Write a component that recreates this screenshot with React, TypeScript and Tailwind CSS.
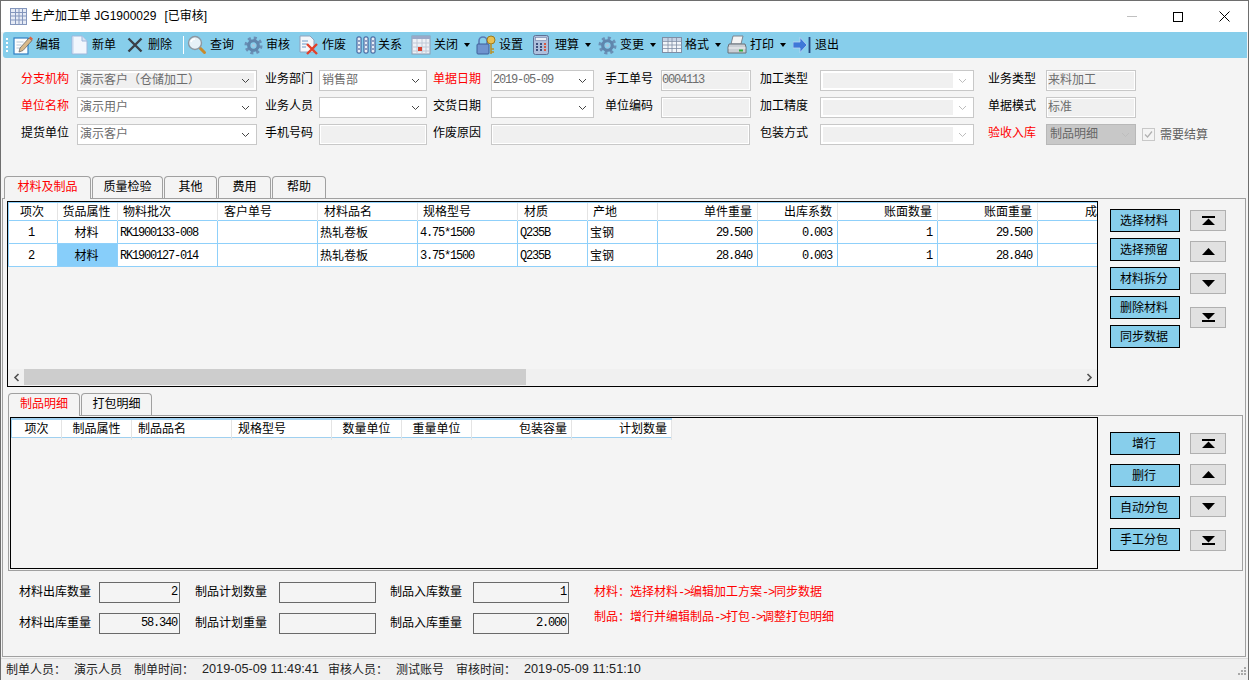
import type { ReactNode } from "react";

const mono = "font-['Liberation_Mono','Noto_Sans_CJK_SC',monospace] tracking-[-1.2px]";
const isLatin = (s: string) => /^[\x00-\x7f]*$/.test(s);

function Chevron({ light }: { light?: boolean }) {
  return (
    <svg width="9" height="6" viewBox="0 0 9 6" className="shrink-0">
      <path d="M1 1l3.5 3.5L8 1" fill="none" stroke={light ? "#bdbdbd" : "#444"} strokeWidth="1" />
    </svg>
  );
}

/* ---- toolbar icons ---- */
function IconEdit() {
  return (
    <svg width="20" height="20" viewBox="0 0 20 20">
      <rect x="1" y="3" width="14" height="16" fill="#fdfdfd" stroke="#2f7fc4" strokeWidth="1.2" />
      <path d="M3.5 7h7M3.5 10h5M3.5 13h5" stroke="#b9c7d6" />
      <path d="M7 13l9-10 3 2.5-9 10-4 1.5z" fill="#d9b98a" stroke="#5b5b5b" strokeWidth=".7" />
      <path d="M16 3l1.4-1.6 2.4 2.2L19 5.500z" fill="#e2603c" />
    </svg>
  );
}
function IconNew() {
  return (
    <svg width="17" height="20" viewBox="0 0 17 20">
      <path d="M1 1h10l5 5v13H1z" fill="#f1f6fd" stroke="#9db7dc" />
      <path d="M11 1v5h5" fill="#d5e2f4" stroke="#9db7dc" />
      <path d="M2 18V2" stroke="#c2d3ec" />
    </svg>
  );
}
function IconDelete() {
  return (
    <svg width="16" height="16" viewBox="0 0 16 16">
      <path d="M1.500 1.500l13 13M14.500 1.500l-13 13" stroke="#3a4048" strokeWidth="2.400" />
    </svg>
  );
}
function IconSearch() {
  return (
    <svg width="20" height="20" viewBox="0 0 20 20">
      <path d="M12.500 12.500l5 5" stroke="#c98a2c" strokeWidth="3" strokeLinecap="round" />
      <circle cx="8" cy="8" r="6.500" fill="#e6f1f7" stroke="#8c98a3" strokeWidth="1.400" />
      <path d="M4 7a4 4 0 0 1 4-3" fill="none" stroke="#fff" strokeWidth="1.500" />
    </svg>
  );
}
function IconGear() {
  return (
    <svg width="19" height="19" viewBox="0 0 20 20">
      <circle cx="10" cy="10" r="7.500" fill="none" stroke="#6a8fb5" strokeWidth="4" strokeDasharray="3 2.890" />
      <circle cx="10" cy="10" r="5" fill="none" stroke="#5f86ad" strokeWidth="3.400" />
      <circle cx="10" cy="10" r="1.800" fill="#a9c4dc" />
    </svg>
  );
}
function IconCancel() {
  return (
    <svg width="20" height="20" viewBox="0 0 20 20">
      <path d="M1 1h10l4 4v12H1z" fill="#f3f6fa" stroke="#8ea3bd" />
      <path d="M3 6h6M3 9h5M3 12h4" stroke="#6d9ac8" />
      <path d="M8 9l10 10M18 9L8 19" stroke="#e2402a" strokeWidth="2.400" />
    </svg>
  );
}
function IconColumns() {
  return (
    <svg width="20" height="18" viewBox="0 0 20 18">
      {[1, 8, 15].map((x) => (
        <g key={x}>
          <rect x={x} y="1" width="4" height="16" rx="1" fill="#e8eef6" stroke="#2f4f8f" />
          <path d={`M${x + 1} 5h2M${x + 1} 9h2M${x + 1} 13h2`} stroke="#2f4f8f" />
        </g>
      ))}
    </svg>
  );
}
function IconCalendar() {
  return (
    <svg width="20" height="20" viewBox="0 0 20 20">
      <rect x="1" y="1" width="18" height="18" fill="#eef1f6" stroke="#8d9ab0" />
      <rect x="1" y="1" width="18" height="3" fill="#9aa9c8" />
      <path d="M1 8h18M1 12h18M1 16h18M6 4v15M11 4v15M15 4v15" stroke="#bfc8d6" />
      <rect x="7" y="12" width="4" height="4" fill="#d9402e" />
    </svg>
  );
}
function IconLockKey() {
  return (
    <svg width="20" height="20" viewBox="0 0 20 20">
      <path d="M3 9V6a4 4 0 0 1 8 0v3" fill="none" stroke="#5a7bb5" strokeWidth="1.600" />
      <rect x="1" y="9" width="12" height="10" rx="1" fill="#6f94cf" stroke="#3f5e99" />
      <circle cx="15" cy="5" r="4" fill="#e8c052" stroke="#9a7a20" />
      <path d="M15 9v10M15 14h3M15 17h3" stroke="#b8922a" strokeWidth="1.600" />
    </svg>
  );
}
function IconCalculator() {
  return (
    <svg width="16" height="20" viewBox="0 0 16 20">
      <rect x=".5" y=".5" width="15" height="19" rx="2" fill="#aebfdc" stroke="#5e6f95" />
      <rect x="2.500" y="2.500" width="11" height="3" fill="#eef3fa" stroke="#6d7ea6" strokeWidth=".6" />
      {[8, 11, 14].map((y) =>
        [3, 7, 11].map((x) => (
          <rect key={`${x}-${y}`} x={x} y={y} width="2" height="2" fill={x === 11 ? "#d8573f" : "#3d4f7c"} />
        )),
      )}
    </svg>
  );
}
function IconGrid() {
  return (
    <svg width="20" height="18" viewBox="0 0 20 18">
      <rect x=".5" y="1.500" width="19" height="15" fill="#f2f5f9" stroke="#7f8ea5" />
      <rect x="1" y="2" width="18" height="3" fill="#c5d2e4" />
      <path d="M1 5.500h18M1 9h18M1 12.500h18M6 2v14M10 2v14M14.500 2v14" stroke="#7f8ea5" strokeWidth=".8" />
    </svg>
  );
}
function IconPrinter() {
  return (
    <svg width="20" height="20" viewBox="0 0 20 20">
      <path d="M6 1h10l-2 8H4z" fill="#f4f4f4" stroke="#7c8590" />
      <path d="M2 9h16l1 3v6H1v-6z" fill="#c9ced4" stroke="#687079" />
      <path d="M1.500 13h17" stroke="#f2f2f2" />
      <rect x="12" y="14.500" width="4" height="2" fill="#2fae3d" />
    </svg>
  );
}
function IconExit() {
  return (
    <svg width="18" height="18" viewBox="0 0 18 18">
      <path d="M0 6h7V1.500L14 9l-7 7.500V12H0z" fill="#3f78d8" stroke="#bcd4f2" strokeWidth=".8" />
      <path d="M16.500 1v16" stroke="#27497f" strokeWidth="1.800" />
    </svg>
  );
}

function ToolItem({ icon, label, gap, width, caret }: { icon: ReactNode; label: string; gap: string; width: string; caret?: boolean }) {
  return (
    <div className={`flex items-center shrink-0 ${width}`}>
      {icon}
      <span className={`text-[12px] text-black ${gap}`}>{label}</span>
      {caret && <span className="ml-[6px] w-0 h-0 border-x-[3px] border-x-transparent border-t-[4px] border-t-black" />}
    </div>
  );
}

function Toolbar() {
  return (
    <div className="ml-[2px] mr-[1px] h-[26px] bg-[#87ceeb] rounded-l-[3px] flex items-center shrink-0">
      <div className="w-[10px] shrink-0 flex flex-col gap-[2px] pl-[3px]">
        {[0, 1, 2, 3].map((i) => (
          <div key={i} className="w-[2px] h-[2px] bg-white" />
        ))}
      </div>
      <ToolItem width="w-[58px]" gap="ml-[3px]" icon={<IconEdit />} label="编辑" />
      <ToolItem width="w-[56px]" gap="ml-[4px]" icon={<IconNew />} label="新单" />
      <ToolItem width="w-[56px]" gap="ml-[5px]" icon={<IconDelete />} label="删除" />
      <div className="w-[4px] h-[18px] shrink-0 border-l border-white" />
      <ToolItem width="w-[57px]" gap="ml-[3px]" icon={<IconSearch />} label="查询" />
      <ToolItem width="w-[55px]" gap="ml-[3px]" icon={<IconGear />} label="审核" />
      <ToolItem width="w-[57px]" gap="ml-[3px]" icon={<IconCancel />} label="作废" />
      <ToolItem width="w-[55px]" gap="ml-[2px]" icon={<IconColumns />} label="关系" />
      <ToolItem width="w-[65px]" gap="ml-[3px]" icon={<IconCalendar />} label="关闭" caret />
      <ToolItem width="w-[57px]" gap="ml-[3px]" icon={<IconLockKey />} label="设置" />
      <ToolItem width="w-[65px]" gap="ml-[6px]" icon={<IconCalculator />} label="理算" caret />
      <ToolItem width="w-[64px]" gap="ml-[3px]" icon={<IconGear />} label="变更" caret />
      <ToolItem width="w-[65px]" gap="ml-[3px]" icon={<IconGrid />} label="格式" caret />
      <ToolItem width="w-[66px]" gap="ml-[3px]" icon={<IconPrinter />} label="打印" caret />
      <ToolItem width="w-[50px]" gap="ml-[4px]" icon={<IconExit />} label="退出" />
    </div>
  );
}

/* ---- form ---- */
type FieldKind = "combo" | "comboGray" | "comboEmpty" | "input" | "wide" | "dark";
type Cell = { label: string; red?: boolean; kind: FieldKind; value?: string };

const labelPads = ["", "pl-[8px]", "pl-[6px]", "pl-[11px]", "pl-[9px]", "pl-[14px]"];

const formRows: Cell[][] = [
  [
    { label: "分支机构", red: true, kind: "comboGray", value: "演示客户（仓储加工）" },
    { label: "业务部门", kind: "combo", value: "销售部" },
    { label: "单据日期", red: true, kind: "combo", value: "2019-05-09" },
    { label: "手工单号", kind: "input", value: "0004113" },
    { label: "加工类型", kind: "comboEmpty" },
    { label: "业务类型", kind: "input", value: "来料加工" },
  ],
  [
    { label: "单位名称", red: true, kind: "combo", value: "演示用户" },
    { label: "业务人员", kind: "combo" },
    { label: "交货日期", kind: "combo" },
    { label: "单位编码", kind: "input" },
    { label: "加工精度", kind: "comboEmpty" },
    { label: "单据模式", kind: "input", value: "标准" },
  ],
  [
    { label: "提货单位", kind: "combo", value: "演示客户" },
    { label: "手机号码", kind: "input" },
    { label: "作废原因", kind: "wide" },
    { label: "", kind: "wide" },
    { label: "包装方式", kind: "comboEmpty" },
    { label: "验收入库", red: true, kind: "dark", value: "制品明细" },
  ],
];

function Value({ text }: { text?: string }) {
  if (!text) return null;
  return <span className={`text-[12px] pb-[2px] ${isLatin(text) ? `${mono} -ml-px` : ""}`}>{text}</span>;
}

function Field({ kind, value }: { kind: FieldKind; value?: string }) {
  if (kind === "combo")
    return (
      <div className="h-[21px] border border-[#c8c8c8] bg-white text-[#6d6d6d] flex items-center justify-between pl-[2px] pr-[6px]">
        <Value text={value} />
        <span className="ml-auto"><Chevron /></span>
      </div>
    );
  if (kind === "comboGray")
    return (
      <div className="h-[21px] border border-[#c8c8c8] bg-white p-[2px]">
        <div className="h-full bg-[#f0f0f0] text-[#6d6d6d] flex items-center justify-between pr-[4px]">
          <Value text={value} />
          <Chevron />
        </div>
      </div>
    );
  if (kind === "comboEmpty")
    return (
      <div className="h-[21px] border border-[#c8c8c8] bg-white p-[2px] flex items-stretch">
        <div className="flex-1 bg-[#f0f0f0]" />
        <div className="w-[18px] flex items-center justify-center"><Chevron light /></div>
      </div>
    );
  if (kind === "dark")
    return (
      <div className="h-[21px] border border-[#b8b8b8] bg-[#c8c8c8] text-[#666] flex items-center justify-between pl-[3px] pr-[5px]">
        <Value text={value} />
        <Chevron light />
      </div>
    );
  return (
    <div className="h-[21px] border border-[#c8c8c8] bg-white p-[1px]">
      <div className="h-full bg-[#f0f0f0] text-[#6d6d6d] flex items-center">
        <Value text={value} />
      </div>
    </div>
  );
}

function FormGrid() {
  return (
    <div className="pl-[20px] pt-[12px] grid grid-cols-[56px_180px_62px_108px_64px_103px_67px_90px_69px_154px_72px_90px_auto] gap-y-[6px] shrink-0">
      {formRows.map((row, r) =>
        row.map((cell, c) => {
          // 作废原因 spans through the 单位编码 column
          if (r === 2 && c === 3) return null;
          return (
            <div key={`${r}-${c}`} className="contents">
              <div className={`text-[12px] leading-[19px] whitespace-nowrap ${labelPads[c]} ${cell.red ? "text-[#ff0000]" : "text-black"}`}>
                {cell.label}
              </div>
              <div className={r === 2 && c === 2 ? "col-span-3 pr-[1px]" : ""}>
                <Field kind={cell.kind} value={cell.value} />
              </div>
              {c === 5 && (
                <div className="pl-[6px] flex items-center gap-[5px] text-[12px] text-[#5f5f5f] whitespace-nowrap">
                  {r === 2 && (
                    <>
                      <svg width="13" height="13" viewBox="0 0 13 13">
                        <rect x=".5" y=".5" width="12" height="12" fill="#f4f4f4" stroke="#c8c8c8" />
                        <path d="M3 6.500l2.500 2.500L10 3.500" fill="none" stroke="#b0b0b0" strokeWidth="1.200" />
                      </svg>
                      需要结算
                    </>
                  )}
                </div>
              )}
            </div>
          );
        }),
      )}
    </div>
  );
}

/* ---- tabs ---- */
function Tab({ label, active, width }: { label: string; active?: boolean; width: string }) {
  return (
    <div
      className={`${width} border-x border-t border-[#a0a0a0] rounded-t-[4px] flex items-center justify-center text-[12px] pb-[2px] shrink-0 ${
        active ? "relative z-10 h-[23px] -mb-px bg-[#f4f4f4] text-[#ff0000]" : "h-[22px] text-black"
      }`}
    >
      {label}
    </div>
  );
}

/* ---- tables ---- */
const topCols = [
  { t: "项次", h: "justify-center pr-[2px]" },
  { t: "货品属性", h: "justify-center pr-[2px]" },
  { t: "物料批次", h: "pl-[5px]" },
  { t: "客户单号", h: "pl-[6px]" },
  { t: "材料品名", h: "pl-[6px]" },
  { t: "规格型号", h: "pl-[5px]" },
  { t: "材质", h: "pl-[6px]" },
  { t: "产地", h: "pl-[5px]" },
  { t: "单件重量", h: "justify-end pr-[5px]" },
  { t: "出库系数", h: "justify-end pr-[5px]" },
  { t: "账面数量", h: "justify-end pr-[5px]" },
  { t: "账面重量", h: "justify-end pr-[5px]" },
  { t: "成", h: "justify-end" },
];
const topGrid = "grid grid-cols-[49px_60px_100px_100px_100px_100px_70px_70px_100px_80px_100px_100px_59px]";
const topRows = [
  ["1", "材料", "RK1900133-008", "", "热轧卷板", "4.75*1500", "Q235B", "宝钢", "29.500", "0.003", "1", "29.500", ""],
  ["2", "材料", "RK1900127-014", "", "热轧卷板", "3.75*1500", "Q235B", "宝钢", "28.840", "0.003", "1", "28.840", ""],
];
const cellAlign = [
  "justify-center pr-[4px]",
  "justify-center pr-[2px]",
  "pl-[2px]",
  "pl-[2px]",
  "pl-[2px]",
  "pl-[2px]",
  "pl-[2px]",
  "pl-[2px]",
  "justify-end pr-[5px]",
  "justify-end pr-[5px]",
  "justify-end pr-[5px]",
  "justify-end pr-[5px]",
  "",
];

function TopTable() {
  return (
    <div className="w-[1091px] h-[186px] border border-black bg-[#f4f4f4] flex flex-col shrink-0 overflow-hidden">
      <div className="border-l border-t border-[#8fd0fa] w-[1089px]">
        <div className={`${topGrid} h-[18px] bg-white border-b border-[#8fd0fa]`}>
          {topCols.map((c) => (
            <div key={c.t} className={`flex items-center text-[12px] pb-[2px] whitespace-nowrap border-r border-[#e4e4e4] last:border-r-0 ${c.h}`}>
              {c.t}
            </div>
          ))}
        </div>
        {topRows.map((row, r) => (
          <div key={r} className={`${topGrid} h-[23px] bg-white border-b border-[#8fd0fa]`}>
            {row.map((v, c) => (
              <div
                key={c}
                className={`flex items-center text-[12px] pt-px whitespace-nowrap border-r border-[#8fd0fa] last:border-r-0 ${cellAlign[c]} ${
                  r === 1 && c === 1 ? "bg-[#87cefa]" : ""
                }`}
              >
                <span className={isLatin(v) ? mono : ""}>{v}</span>
              </div>
            ))}
          </div>
        ))}
      </div>
      <div className="flex-1" />
      <div className="h-[16px] mb-px bg-[#f0f0f0] flex items-center">
        <div className="w-[16px] flex justify-center">
          <svg width="7" height="9" viewBox="0 0 7 9">
            <path d="M5.500 1L2 4.500 5.500 8" fill="none" stroke="#505050" strokeWidth="1.600" />
          </svg>
        </div>
        <div className="w-[502px] h-full bg-[#cdcdcd]" />
        <div className="flex-1" />
        <div className="w-[16px] flex justify-center">
          <svg width="7" height="9" viewBox="0 0 7 9">
            <path d="M1.500 1L5 4.500 1.500 8" fill="none" stroke="#505050" strokeWidth="1.600" />
          </svg>
        </div>
      </div>
    </div>
  );
}

const lowerCols = [
  { t: "项次", h: "justify-center" },
  { t: "制品属性", h: "justify-center" },
  { t: "制品品名", h: "pl-[6px]" },
  { t: "规格型号", h: "pl-[6px]" },
  { t: "数量单位", h: "justify-center" },
  { t: "重量单位", h: "justify-center" },
  { t: "包装容量", h: "justify-end pr-[4px]" },
  { t: "计划数量", h: "justify-end pr-[4px]" },
];

function LowerTable() {
  return (
    <div className="w-[1088px] h-[152px] border border-black bg-[#f4f4f4] shrink-0">
      <div className="w-[661px] border-t-2 border-l border-b border-[#9fd0f0] bg-white grid grid-cols-[50px_70px_100px_100px_70px_70px_100px_100px] h-[20px]">
        {lowerCols.map((c) => (
          <div key={c.t} className={`flex items-center text-[12px] pb-[2px] whitespace-nowrap border-r border-[#e4e4e4] ${c.h}`}>
            {c.t}
          </div>
        ))}
      </div>
    </div>
  );
}

/* ---- side buttons ---- */
function BlueButton({ label }: { label: string }) {
  return (
    <div className="w-[70px] h-[23px] border border-black bg-[#87ceeb] flex items-center justify-center text-[12px] pr-[2px]">
      {label}
    </div>
  );
}

function ArrowButton({ dir, mt }: { dir: "first" | "up" | "down" | "last"; mt: string }) {
  const path =
    dir === "first"
      ? "M0 0h13v2H0zM6.500 2.500L13 9H0z"
      : dir === "up"
        ? "M6.500 1L13 8H0z"
        : dir === "down"
          ? "M0 1h13L6.500 8z"
          : "M0 0h13L6.500 6.500zM0 7h13v2H0z";
  return (
    <div className={`w-[36px] h-[21px] border border-[#b0b0b0] bg-[#e1e1e1] flex items-center justify-center ${mt}`}>
      <svg width="13" height="9" viewBox="0 0 13 9">
        <path d={path} fill="#000" />
      </svg>
    </div>
  );
}

/* ---- summary ---- */
function SumField({ value, width }: { value?: string; width: string }) {
  return (
    <div className={`${width} h-[21px] border border-[#696969] bg-[#f4f4f4] flex items-center justify-end pr-[2px] pb-[2px] text-[12px] shrink-0`}>
      {value && <span className={mono}>{value}</span>}
    </div>
  );
}

function SumRow({ a, b, c, av, cv }: { a: string; b: string; c: string; av: string; cv: string }) {
  return (
    <div className="flex items-center h-[21px] text-[12px] pl-[16px]">
      <span className="w-[80px] shrink-0 pb-[2px]">{a}</span>
      <SumField value={av} width="w-[81px]" />
      <span className="w-[99px] pl-[15px] shrink-0 pb-[2px]">{b}</span>
      <SumField width="w-[97px]" />
      <span className="w-[97px] pl-[14px] shrink-0 pb-[2px]">{c}</span>
      <SumField value={cv} width="w-[96px]" />
    </div>
  );
}

const Arrow = () => <span className={mono}>-&gt;</span>;

export default function App() {
  return (
    <div className="w-[1249px] h-[680px] overflow-hidden flex flex-col bg-[#f4f4f4] border-x border-t border-[#6e6e6e] text-black font-['Liberation_Sans','Noto_Sans_CJK_SC',sans-serif]">
      {/* Title bar */}
      <div className="h-[31px] bg-white flex items-center shrink-0">
        <svg width="17" height="17" viewBox="0 0 17 17" className="ml-[9px]">
          <rect x=".5" y=".5" width="16" height="16" fill="#e6ebf5" stroke="#8496bc" />
          <path d="M1 4.500h15M1 8h15M1 12h15M5.500 1v15M9 1v15M12.500 1v15" stroke="#8496bc" />
        </svg>
        <span className="ml-[4px] text-[12px] pb-[2px]">
          生产加工单 JG1900029<span className="ml-[8px]">[已审核]</span>
        </span>
        <div className="ml-auto flex items-center mr-[1px]">
          <div className="w-[46px] h-[31px] flex items-center justify-center">
            <div className="w-[10px] h-px bg-[#c0c0c0]" />
          </div>
          <div className="w-[46px] h-[31px] flex items-center justify-center">
            <div className="w-[10px] h-[10px] border border-black" />
          </div>
          <div className="w-[46px] h-[31px] flex items-center justify-center">
            <svg width="11" height="11" viewBox="0 0 11 11">
              <path d="M.5.500l10 10M10.500.500l-10 10" stroke="#000" />
            </svg>
          </div>
        </div>
      </div>

      <Toolbar />
      <FormGrid />

      {/* Main tab group */}
      <div className="mt-[31px] pl-[3px] flex gap-px shrink-0">
        <Tab label="材料及制品" active width="w-[87px]" />
        <Tab label="质量检验" width="w-[71px]" />
        <Tab label="其他" width="w-[53px]" />
        <Tab label="费用" width="w-[53px]" />
        <Tab label="帮助" width="w-[54px]" />
      </div>
      <div className="ml-px mr-[2px] h-[459px] border border-[#a0a0a0] pt-[2px] flex flex-col shrink-0">
        <div className="flex pl-[4px]">
          <TopTable />
          <div className="ml-[12px] pt-[8px] flex flex-col gap-[6px]">
            <BlueButton label="选择材料" />
            <BlueButton label="选择预留" />
            <BlueButton label="材料拆分" />
            <BlueButton label="删除材料" />
            <BlueButton label="同步数据" />
          </div>
          <div className="ml-[10px] pt-[9px] flex flex-col">
            <ArrowButton dir="first" mt="" />
            <ArrowButton dir="up" mt="mt-[10px]" />
            <ArrowButton dir="down" mt="mt-[11px]" />
            <ArrowButton dir="last" mt="mt-[13px]" />
          </div>
        </div>

        {/* Lower tab group */}
        <div className="mt-[6px] pl-[5px] flex gap-px">
          <Tab label="制品明细" active width="w-[72px]" />
          <Tab label="打包明细" width="w-[71px]" />
        </div>
        <div className="ml-[5px] w-[1235px] h-[156px] border border-[#a0a0a0] pt-px pl-px flex shrink-0">
          <LowerTable />
          <div className="ml-[12px] pt-[15px] flex flex-col gap-[9px]">
            <BlueButton label="增行" />
            <BlueButton label="删行" />
            <BlueButton label="自动分包" />
            <BlueButton label="手工分包" />
          </div>
          <div className="ml-[10px] pt-[16px] flex flex-col">
            <ArrowButton dir="first" mt="" />
            <ArrowButton dir="up" mt="mt-[10px]" />
            <ArrowButton dir="down" mt="mt-[11px]" />
            <ArrowButton dir="last" mt="mt-[13px]" />
          </div>
        </div>

        {/* Totals */}
        <div className="mt-[11px] flex">
          <div className="flex flex-col gap-[10px]">
            <SumRow a="材料出库数量" b="制品计划数量" c="制品入库数量" av="2" cv="1" />
            <SumRow a="材料出库重量" b="制品计划重量" c="制品入库重量" av="58.340" cv="2.000" />
          </div>
          <div className="ml-[25px] flex flex-col gap-[6px] pt-px text-[12px] leading-[18px] text-[#ff0000] whitespace-nowrap">
            <span>材料：选择材料<Arrow />编辑加工方案<Arrow />同步数据</span>
            <span>制品：增行并编辑制品<Arrow />打包<Arrow />调整打包明细</span>
          </div>
        </div>
      </div>

      {/* Status bar */}
      <div className="relative flex-1 mt-px border-t border-[#dcdcdc] bg-[#f0f0f0] flex items-center pl-[5px] pt-px text-[12px] whitespace-nowrap text-[#222]">
        <span className="w-[68px]">制单人员：</span>
        <span className="w-[60px]">演示人员</span>
        <span className="w-[68px]">制单时间：</span>
        <span className="w-[126px] text-[12.7px]">2019-05-09 11:49:41</span>
        <span className="w-[68px]">审核人员：</span>
        <span className="w-[60px]">测试账号</span>
        <span className="w-[68px]">审核时间：</span>
        <span className="text-[12.7px]">2019-05-09 11:51:10</span>
        <svg width="10" height="12" viewBox="0 0 10 12" className="absolute right-[2px] bottom-[2px]">
          <path d="M8 1h2v2H8zM5 4h2v2H5zM8 4h2v2H8zM2 7h2v2H2zM5 7h2v2H5zM8 7h2v2H8z" fill="#a8a8a8" />
        </svg>
      </div>
    </div>
  );
}
